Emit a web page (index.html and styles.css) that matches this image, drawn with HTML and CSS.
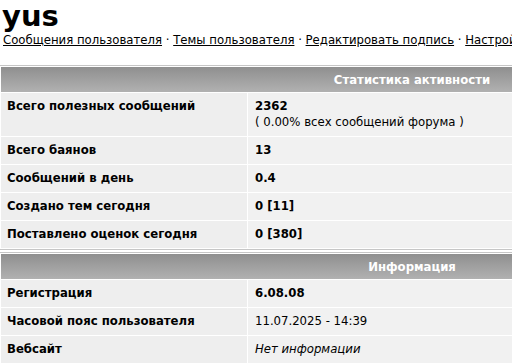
FILE: index.html
```html
<!DOCTYPE html>
<html lang="ru">
<head>
    <meta charset="UTF-8">
    <meta name="viewport" content="width=device-width, initial-scale=1.0">
    <title>yus - профиль</title>
    <link rel="stylesheet" href="styles.css">
</head>
<body>
    <h1 class="username">yus</h1>
    <div class="user-links">
        <a href="#">Сообщения пользователя</a> · <a href="#">Темы пользователя</a> · <a href="#">Редактировать подпись</a> · <a href="#">Настройки</a>
    </div>

    <div class="box">
        <div class="box-head"><span></span><span class="box-title">Статистика активности</span></div>
        <div class="row">
            <div class="label">Всего полезных сообщений</div>
            <div class="value"><b>2362</b><br>( 0.00% всех сообщений форума )</div>
        </div>
        <div class="row">
            <div class="label">Всего баянов</div>
            <div class="value"><b>13</b></div>
        </div>
        <div class="row">
            <div class="label">Сообщений в день</div>
            <div class="value"><b>0.4</b></div>
        </div>
        <div class="row">
            <div class="label">Создано тем сегодня</div>
            <div class="value"><b>0 [11]</b></div>
        </div>
        <div class="row">
            <div class="label">Поставлено оценок сегодня</div>
            <div class="value"><b>0 [380]</b></div>
        </div>
    </div>

    <div class="box">
        <div class="box-head"><span></span><span class="box-title">Информация</span></div>
        <div class="row">
            <div class="label">Регистрация</div>
            <div class="value"><b>6.08.08</b></div>
        </div>
        <div class="row">
            <div class="label">Часовой пояс пользователя</div>
            <div class="value">11.07.2025 - 14:39</div>
        </div>
        <div class="row">
            <div class="label">Вебсайт</div>
            <div class="value"><i>Нет информации</i></div>
        </div>
    </div>
</body>
</html>
```

FILE: styles.css
```css
html {
    overflow: hidden;
}
body {
    font-family: "DejaVu Sans Condensed", "DejaVu Sans", Verdana, sans-serif;
    font-size: 13px;
    line-height: 16px;
    color: #000;
    margin: 0;
    background: #fff;
}
.username {
    font-family: "DejaVu Sans", Verdana, sans-serif;
    font-size: 29px;
    line-height: 32px;
    margin: 0 0 0 2px;
}
.user-links {
    white-space: nowrap;
    margin-left: 3px;
}
.user-links a {
    color: #000;
}
.box {
    width: 576px;
    border-top: 1px solid #c6c6c6;
    border-bottom: 1px solid #c6c6c6;
    padding: 1px;
    display: grid;
    gap: 1px;
    margin-top: 17px;
}
.box + .box {
    margin-top: 2px;
}
.box-head {
    display: grid;
    grid-template-columns: 246px 1fr;
    height: 25px;
    line-height: 25px;
    background: linear-gradient(#8f8f8f, #b1b1b1);
    color: #fff;
    font-weight: bold;
}
.box-title {
    text-align: center;
}
.row {
    display: grid;
    grid-template-columns: 246px 1fr;
    gap: 1px;
}
.label {
    background: #eeeeee;
    font-weight: bold;
    padding: 5px 6px 6px;
}
.value {
    background: #f1f1f1;
    padding: 5px 7px 6px;
}
```
